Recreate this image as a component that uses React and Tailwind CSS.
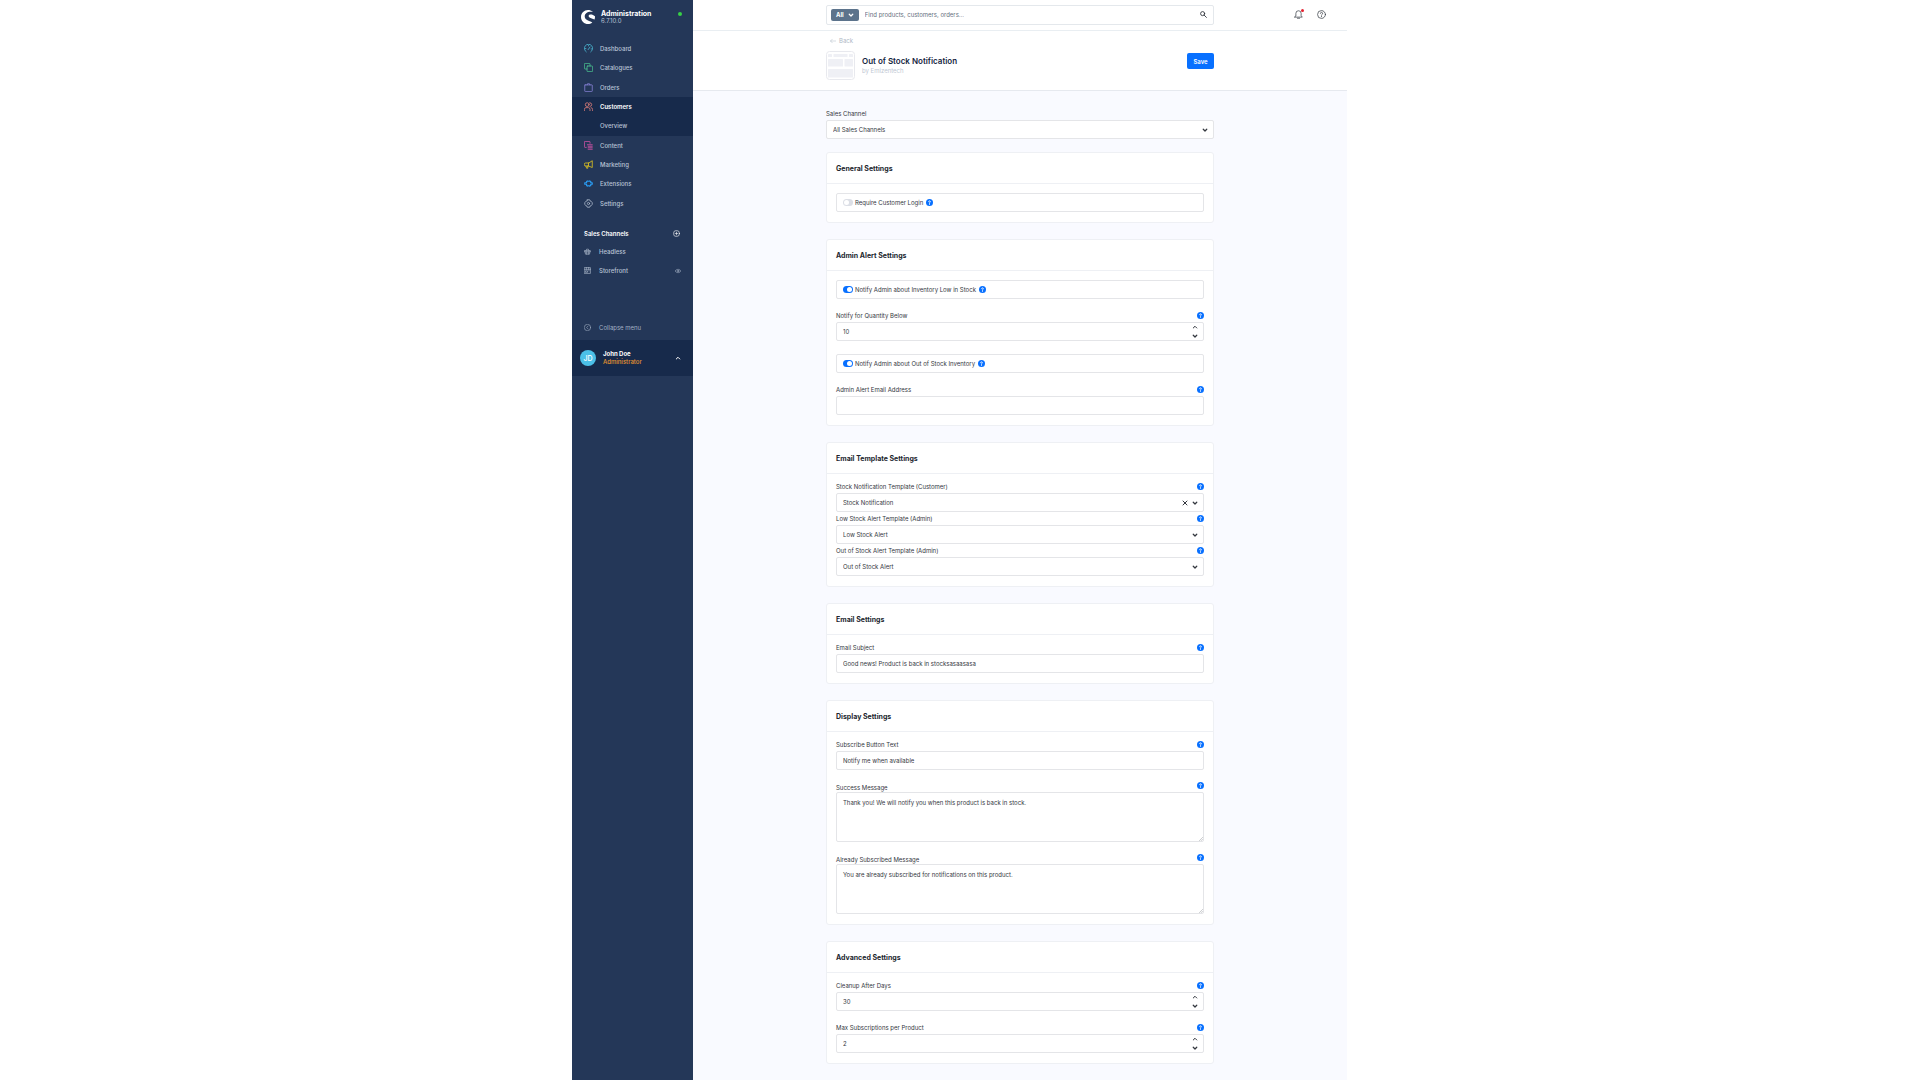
import React, { useState } from "react";
import { SiShopware } from "react-icons/si";

const iconProps = {
  viewBox: "0 0 24 24",
  fill: "none",
  stroke: "currentColor",
  strokeWidth: 2,
  strokeLinecap: "round",
  strokeLinejoin: "round",
  "aria-hidden": true,
};

const Icon = ({ className, children }) => (
  <svg {...iconProps} className={className}>
    {children}
  </svg>
);

const navItems = [
  {
    label: "Dashboard",
    color: "text-[#4fc3dc]",
    icon: (
      <path d="M6 21a11 11 0 1 1 12 0M11 15l5-7M4 12h1M12 4v1M19 13h1" />
    ),
  },
  {
    label: "Catalogues",
    color: "text-[#4ecb94]",
    icon: (
      <>
        <rect x="8" y="8" width="15" height="15" rx="2" />
        <path d="M8 16H3a2 2 0 0 1-2-2V3a2 2 0 0 1 2-2h11a2 2 0 0 1 2 2v5" />
      </>
    ),
  },
  {
    label: "Orders",
    color: "text-[#8f88e0]",
    icon: (
      <path d="M3 5h18a1 1 0 0 1 1 1v15a2 2 0 0 1-2 2H4a2 2 0 0 1-2-2V6a1 1 0 0 1 1-1zM8 5a4 4 0 0 1 8 0" />
    ),
  },
  {
    label: "Customers",
    color: "text-[#f0857d]",
    active: true,
    icon: (
      <>
        <circle cx="8.5" cy="7" r="5" />
        <path d="M1 23v-3a5 5 0 0 1 4-5h7a5 5 0 0 1 4 5v3M15 2a5 5 0 0 1 1 10M19 15a5 5 0 0 1 4 5v3" />
      </>
    ),
  },
  { label: "Overview", sub: true },
  {
    label: "Content",
    color: "text-[#e655b0]",
    icon: (
      <path d="M6 17H3a2 2 0 0 1-2-2V3a2 2 0 0 1 2-2h11a2 2 0 0 1 2 2v3M9 10h13M11 14h11M11 18h11M11 22h11" />
    ),
  },
  {
    label: "Marketing",
    color: "text-[#f2d21b]",
    icon: (
      <path d="M22 3v17L12 16H4a3 3 0 0 1-3-3v-2a3 3 0 0 1 3-3h8zM12 8v8M5 16l2 6h3v-6" />
    ),
  },
  {
    label: "Extensions",
    color: "text-[#2a9df4]",
    icon: (
      <path
        strokeWidth="3"
        d="M7 6h11v4h4v4h-4v4H7v-4H2v-4h5zM10 6V5M15 6V5M10 18v1M15 18v1"
      />
    ),
  },
  {
    label: "Settings",
    color: "text-[#b3bfd0]",
    icon: (
      <>
        <path d="M9 2h6l1 3 3 1 3 4v4l-3 4-3 1-1 3H9l-1-3-3-1-3-4v-4l3-4 3-1z" />
        <circle cx="12" cy="12" r="3" />
      </>
    ),
  },
];

const ChevronDown = () => (
  <Icon className="h-1.5 w-1.5 shrink-0 stroke-[5]">
    <path d="M5 9l7 7 7-7" />
  </Icon>
);

const ChevronUp = () => (
  <Icon className="h-1.5 w-1.5 shrink-0 stroke-[4]">
    <path d="M5 16l7-7 7 7" />
  </Icon>
);

const Help = () => (
  <button
    type="button"
    aria-label="Help"
    className="flex h-[7px] w-[7px] shrink-0 items-center justify-center rounded-full bg-[#0870ff] text-white"
  >
    <Icon className="h-[5px] w-[5px] stroke-[4]">
      <path d="M8 8a4 4 0 1 1 5 4l-1 1v3M12 20v1" />
    </Icon>
  </button>
);

const Card = ({ title, children }) => (
  <section className="rounded-[3px] border border-[#eef0f4] bg-white">
    <h2 className="flex h-[31px] items-center border-b border-[#eef0f4] px-[9px] text-[7px] font-bold text-[#22262e]">
      {title}
    </h2>
    <div className="px-[9px] pt-[9px] pb-[10px]">{children}</div>
  </section>
);

const boxClass =
  "flex h-[19px] items-center rounded-xs border border-[#e4e5e8] bg-white pr-[5px] pl-1.5";

const Field = ({ id, label, help = true, tall, children }) => (
  <div>
    <div
      className={`flex h-[10px] justify-between ${tall ? "items-end" : "items-start"}`}
    >
      <label htmlFor={id} className="leading-[8px]">
        {label}
      </label>
      {help && (
        <span className="self-start">
          <Help />
        </span>
      )}
    </div>
    {children}
  </div>
);

const TextField = ({ id, label, value = "" }) => (
  <Field id={id} label={label}>
    <div className={boxClass}>
      <input
        id={id}
        type="text"
        defaultValue={value}
        className="min-w-0 flex-1 outline-none"
      />
    </div>
  </Field>
);

const NumberField = ({ id, label, initial }) => {
  const [value, setValue] = useState(initial);
  return (
    <Field id={id} label={label}>
      <div className={boxClass}>
        <input
          id={id}
          type="text"
          inputMode="numeric"
          value={value}
          onChange={(e) => setValue(Number(e.target.value) || 0)}
          className="min-w-0 flex-1 outline-none"
        />
        <div className="flex flex-col gap-[3px]">
          <button
            type="button"
            aria-label="Increase"
            onClick={() => setValue(value + 1)}
          >
            <ChevronUp />
          </button>
          <button
            type="button"
            aria-label="Decrease"
            onClick={() => setValue(value - 1)}
          >
            <ChevronDown />
          </button>
        </div>
      </div>
    </Field>
  );
};

const SelectField = ({ id, label, value, help, clearable }) => (
  <Field id={id} label={label} help={help}>
    <div className={boxClass}>
      <select id={id} className="min-w-0 flex-1 appearance-none outline-none">
        <option>{value}</option>
      </select>
      {clearable && (
        <button type="button" aria-label="Clear" className="mr-1">
          <Icon className="h-1.5 w-1.5 stroke-[4]">
            <path d="M4 4l16 16M20 4L4 20" />
          </Icon>
        </button>
      )}
      <ChevronDown />
    </div>
  </Field>
);

const TextArea = ({ id, label, value }) => (
  <Field id={id} label={label} tall>
    <div className="relative">
      <textarea
        id={id}
        defaultValue={value}
        className="block h-[50px] w-full resize-none rounded-xs border border-[#e4e5e8] px-1.5 py-[5px] leading-[9px] outline-none"
      />
      <Icon className="absolute right-px bottom-px h-1 w-1 stroke-[4] text-[#b4b6ba]">
        <path d="M22 2L2 22M22 13l-9 9" />
      </Icon>
    </div>
  </Field>
);

const Toggle = ({ id, label, checked }) => (
  <div className="flex h-[19px] items-center rounded-xs border border-[#e4e5e8] px-1.5">
    <input
      id={id}
      type="checkbox"
      role="switch"
      defaultChecked={checked}
      className="mr-0.5 flex h-[7px] w-[10px] appearance-none items-center rounded-full bg-[#dcdfe6] p-px before:h-[5px] before:w-[5px] before:rounded-full before:bg-white checked:justify-end checked:bg-[#0870ff]"
    />
    <label htmlFor={id} className="mr-[3px]">
      {label}
    </label>
    <Help />
  </div>
);

const Sidebar = () => (
  <aside className="w-[121px] shrink-0 bg-[#243758] text-[#b9c4d6]">
    <div className="flex h-[39px] items-start pt-[10px] pr-[11px] pl-[9px]">
      <SiShopware className="h-3.5 w-3.5 text-white" />
      <div className="ml-1.5 flex-1">
        <p className="text-[7px] leading-[8px] font-bold text-white">
          Administration
        </p>
        <p className="text-[6px] leading-[6px]">6.7.10.0</p>
      </div>
      <span className="mt-0.5 h-1 w-1 rounded-full bg-[#37d046]" />
    </div>

    <nav className="grid h-[174px] grid-rows-9 font-medium">
      {navItems.map((item) => (
        <a
          key={item.label}
          href="#"
          className={`flex items-center gap-[7px] px-3 ${
            item.active || item.sub ? "bg-[#172a4b]" : ""
          } ${item.active ? "font-semibold text-white" : ""}`}
        >
          {item.sub ? (
            <span className="w-[9px]" />
          ) : (
            <Icon className={`h-[9px] w-[9px] ${item.color}`}>
              {item.icon}
            </Icon>
          )}
          {item.label}
        </a>
      ))}
    </nav>

    <div className="mt-[15px] flex h-[11px] items-center justify-between pr-[13px] pl-3 font-semibold text-white">
      Sales Channels
      <button type="button" aria-label="Add sales channel">
        <Icon className="h-[7px] w-[7px]">
          <circle cx="12" cy="12" r="10.5" />
          <path d="M12 7v10M7 12h10" />
        </Icon>
      </button>
    </div>
    <div className="mt-[3px] font-medium">
      <a href="#" className="flex h-[19px] items-center gap-2 px-3">
        <Icon className="h-[7px] w-[7px]">
          <path d="M2 9h20v4H2zM4 13l1 8h14l1-8M9 13v8M15 13v8M7 9l2-5h6l2 5" />
        </Icon>
        Headless
      </a>
      <div className="flex h-[19px] items-center px-3">
        <a href="#" className="flex flex-1 items-center gap-2">
          <Icon className="h-[7px] w-[7px]">
            <path d="M2 2h20v20H2zM2 8h20M8 2v6M16 2v6M6 13h6v5H6zM16 13h2" />
          </Icon>
          Storefront
        </a>
        <button type="button" aria-label="Open storefront">
          <Icon className="h-1.5 w-1.5">
            <path d="M1 12c4-9 18-9 22 0-4 9-18 9-22 0z" />
            <circle cx="12" cy="12" r="3" />
          </Icon>
        </button>
      </div>
    </div>

    <button
      type="button"
      className="mt-[37px] flex h-5 w-full items-center gap-2 px-3 text-[#a3b0c4]"
    >
      <Icon className="h-[7px] w-[7px]">
        <circle cx="12" cy="12" r="11" />
        <path d="M14 7l-5 5 5 5" />
      </Icon>
      Collapse menu
    </button>

    <button
      type="button"
      className="mt-[3px] flex h-9 w-full items-center bg-[#172a4b] pr-3 pl-2 text-left text-white"
    >
      <span className="flex h-4 w-4 items-center justify-center rounded-full bg-[#4bc0e8] text-[7px] font-medium">
        JD
      </span>
      <span className="ml-[7px] flex-1 leading-[8px]">
        <span className="block font-bold">John Doe</span>
        <span className="block font-medium text-[#e8952f]">Administrator</span>
      </span>
      <ChevronUp />
    </button>
  </aside>
);

const Header = () => (
  <header className="grid h-[31px] grid-cols-[1fr_388px_1fr] items-center border-b border-[#e9eef2] pb-px">
    <div />
    <div className="flex h-5 items-center rounded-xs border border-[#e4e8ec] pr-1.5 pl-1">
      <button
        type="button"
        className="flex h-3 items-center gap-1 rounded-xs bg-[#5c738c] px-[5px] font-bold text-white"
      >
        All
        <ChevronDown />
      </button>
      <input
        type="text"
        aria-label="Search"
        placeholder="Find products, customers, orders..."
        className="ml-1.5 min-w-0 flex-1 outline-none placeholder:text-[#66707e]"
      />
      <button type="button" aria-label="Start search">
        <Icon className="h-[7px] w-[7px] stroke-[3] text-[#30353d]">
          <circle cx="9" cy="9" r="7" />
          <path d="M14 14l8 8" />
        </Icon>
      </button>
    </div>
    <div className="flex items-center justify-end gap-3.5 pr-[21px] text-[#3e434b]">
      <button type="button" aria-label="Notifications" className="relative">
        <Icon className="h-[9px] w-[9px]">
          <path d="M2 19h20l-3-4V9a7 7 0 0 0-14 0v6zM9 22h6" />
        </Icon>
        <span className="absolute -top-px -right-px h-[3px] w-[3px] rounded-full bg-[#e5202e]" />
      </button>
      <button type="button" aria-label="Help center">
        <Icon className="h-[9px] w-[9px]">
          <circle cx="12" cy="12" r="10.5" />
          <path d="M9 9a3 3 0 1 1 4 3l-1 1v1M12 17v1" />
        </Icon>
      </button>
    </div>
  </header>
);

const Thumbnail = () => (
  <svg
    viewBox="0 0 30 30"
    className="h-[30px] w-[30px] text-[#eff0f5]"
    fill="currentColor"
    aria-hidden="true"
  >
    <rect
      x="0.5"
      y="0.5"
      width="28"
      height="28"
      rx="3"
      fill="#fff"
      stroke="#e8e9ee"
    />
    <rect x="2" y="3" width="4" height="3" rx="0.5" />
    <rect x="7.5" y="3" width="14" height="3" rx="0.5" />
    <rect x="23" y="3" width="4" height="3" rx="0.5" />
    <rect x="2" y="8" width="15" height="7.5" rx="0.5" />
    <rect x="18.5" y="8" width="8.5" height="7.5" rx="0.5" />
    <rect x="2" y="18" width="25" height="8.5" rx="0.5" />
  </svg>
);

const PageHead = () => (
  <div className="h-[60px] border-b border-[#e6e9ef]">
    <div className="mx-auto max-w-[388px] pt-[5px]">
      <a
        href="#"
        className="flex h-[9px] items-center gap-[3px] pl-1 text-[#aeb8c6]"
      >
        <Icon className="h-1.5 w-1.5">
          <path d="M23 12H2M9 5l-7 7 7 7" />
        </Icon>
        Back
      </a>
      <div className="mt-1.5 flex items-start">
        <Thumbnail />
        <div className="ml-1.5 flex-1 pt-1">
          <h1 className="text-[8px] leading-[12px] font-semibold text-[#142440]">
            Out of Stock Notification
          </h1>
          <p className="text-[6px] leading-[7px] text-[#c0c8d3]">
            by Emizentech
          </p>
        </div>
        <button
          type="button"
          className="mt-0.5 h-4 w-[27px] rounded-xs bg-[#0870ff] text-[6px] font-semibold text-white"
        >
          Save
        </button>
      </div>
    </div>
  </div>
);

const App = () => (
  <div className="min-h-screen bg-white font-['Inter',sans-serif] text-[6px] leading-[9px] text-[#33373e]">
    <div className="mx-auto flex min-h-screen max-w-[776px] pr-px">
      <Sidebar />
      <div className="flex min-w-0 flex-1 flex-col">
        <Header />
        <PageHead />
        <main className="flex-1 bg-[#f9faff]">
          <div className="mx-auto flex max-w-[388px] flex-col gap-4 pt-[19px] pb-4">
            <div className="-mb-[3px]">
              <SelectField
                id="sales-channel"
                label="Sales Channel"
                value="All Sales Channels"
                help={false}
              />
            </div>

            <Card title="General Settings">
              <Toggle id="require-login" label="Require Customer Login" />
            </Card>

            <Card title="Admin Alert Settings">
              <div className="flex flex-col gap-[13px]">
                <Toggle
                  id="low-stock"
                  label="Notify Admin about Inventory Low in Stock"
                  checked
                />
                <NumberField
                  id="quantity"
                  label="Notify for Quantity Below"
                  initial={10}
                />
                <Toggle
                  id="out-of-stock"
                  label="Notify Admin about Out of Stock Inventory"
                  checked
                />
                <TextField id="admin-email" label="Admin Alert Email Address" />
              </div>
            </Card>

            <Card title="Email Template Settings">
              <div className="flex flex-col gap-[3px]">
                <SelectField
                  id="tpl-customer"
                  label="Stock Notification Template (Customer)"
                  value="Stock Notification"
                  clearable
                />
                <SelectField
                  id="tpl-low"
                  label="Low Stock Alert Template (Admin)"
                  value="Low Stock Alert"
                />
                <SelectField
                  id="tpl-out"
                  label="Out of Stock Alert Template (Admin)"
                  value="Out of Stock Alert"
                />
              </div>
            </Card>

            <Card title="Email Settings">
              <TextField
                id="subject"
                label="Email Subject"
                value="Good news! Product is back in stocksasaasasa"
              />
            </Card>

            <Card title="Display Settings">
              <div className="flex flex-col gap-3">
                <TextField
                  id="subscribe"
                  label="Subscribe Button Text"
                  value="Notify me when available"
                />
                <TextArea
                  id="success"
                  label="Success Message"
                  value="Thank you! We will notify you when this product is back in stock."
                />
                <TextArea
                  id="already"
                  label="Already Subscribed Message"
                  value="You are already subscribed for notifications on this product."
                />
              </div>
            </Card>

            <Card title="Advanced Settings">
              <div className="flex flex-col gap-[13px]">
                <NumberField
                  id="cleanup"
                  label="Cleanup After Days"
                  initial={30}
                />
                <NumberField
                  id="max"
                  label="Max Subscriptions per Product"
                  initial={2}
                />
              </div>
            </Card>
          </div>
        </main>
      </div>
    </div>
  </div>
);

export default App;
